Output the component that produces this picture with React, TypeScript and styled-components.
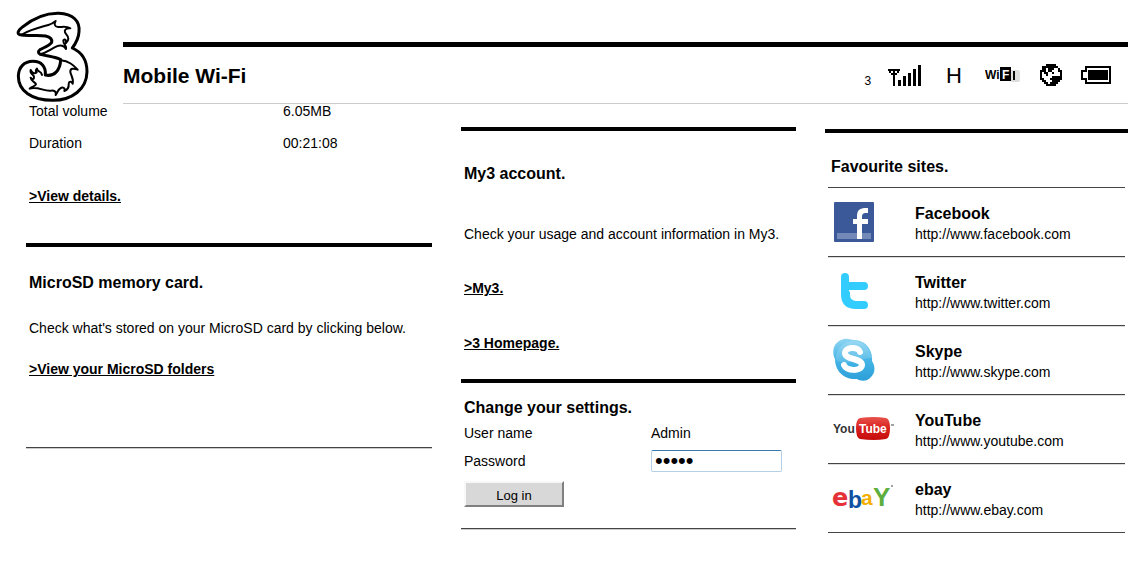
import React from "react";
import styled, { createGlobalStyle } from "styled-components";

const GlobalStyle = createGlobalStyle`
  *, *::before, *::after { box-sizing: border-box; }
  body {
    margin: 0;
    background: #fff;
    color: #000;
    font-family: "Liberation Sans", Arial, sans-serif;
    font-size: 14px;
    line-height: 16px;
  }
  h1, h2, p, dl, dd, ul { margin: 0; padding: 0; }
  svg { display: block; flex: none; }
`;

const Page = styled.div`
  padding-right: 8px;
`;

const Header = styled.header`
  display: flex;
  height: 104px;
`;

const LogoLink = styled.a`
  flex: none;
  width: 123px;
  padding: 5px 0 0 10px;
`;

const HeaderBar = styled.div`
  flex: 1;
  margin-top: 42px;
  border-top: 5px solid #000;
  border-bottom: 1px solid #ccc;
  display: flex;
  justify-content: space-between;
  align-items: center;
`;

const Title = styled.h1`
  padding-top: 2px;
  font-size: 21px;
  line-height: 24px;
`;

const Status = styled.div`
  display: flex;
  align-items: center;
  padding-right: 17px;
`;

const Network = styled.span`
  font-size: 12px;
  line-height: 14px;
  padding-top: 12px;
  margin-right: 17px;
`;

const Mode = styled.span`
  font-size: 22px;
  line-height: 24px;
  margin: 2px 23px 0 25px;
`;

const StatusIcon = styled.svg<{ $gap: number }>`
  margin-right: ${(p) => p.$gap}px;
`;

const Columns = styled.main`
  display: grid;
  grid-template-columns: 406fr 335fr 303fr;
  column-gap: 29px;
  padding-left: 26px;
  align-items: start;
`;

const Column = styled.div<{ $top?: number }>`
  min-width: 0;
  padding-top: ${(p) => p.$top ?? 0}px;
`;

const Panel = styled.section<{ $plain?: boolean; $top?: number; $bottom: number }>`
  border-top: ${(p) => (p.$plain ? "0" : "4px solid #000")};
  padding: ${(p) => p.$top ?? 0}px 3px ${(p) => p.$bottom}px;
`;

const Rule = styled.div`
  height: 2px;
  border-top: 1px solid #444;
  background: #ccc;
`;

const Heading = styled.h2`
  font-size: 16px;
  line-height: 18px;
`;

const Text = styled.p<{ $top: number }>`
  margin-top: ${(p) => p.$top}px;
`;

const ActionLink = styled.a<{ $top: number }>`
  display: block;
  width: fit-content;
  margin-top: ${(p) => p.$top}px;
  color: #000;
  font-weight: bold;
`;

const Stats = styled.dl`
  display: grid;
  grid-template-columns: 254px 1fr;
  row-gap: 18px;
  line-height: 14px;
`;

const Form = styled.form`
  display: grid;
  grid-template-columns: 187px 131px;
  align-items: center;
  row-gap: 9px;
  margin-top: 8px;
`;

const PasswordInput = styled.input`
  width: 100%;
  height: 22px;
  padding: 0 3px;
  border: 1px solid #b5cfe7;
  border-top-color: #3d7bad;
  border-radius: 2px;
  background: #fff;
  color: #000;
  font: 22px/20px "Liberation Sans", Arial, sans-serif;
`;

const LoginButton = styled.button`
  width: 100px;
  height: 26px;
  padding: 2px 0 0;
  border: 2px solid;
  border-color: #f8f8f8 #808080 #808080 #f8f8f8;
  background: #d8d8d8;
  color: #000;
  font: 13px "Liberation Sans", Arial, sans-serif;
`;

const SiteHeading = styled(Heading)`
  padding-left: 3px;
`;

const SiteList = styled.ul`
  margin-top: 11px;
  border-top: 1px solid #444;
  list-style: none;
`;

const SiteItem = styled.li`
  height: 69px;
  border-bottom: 1px solid #444;
  box-shadow: 0 1px #ddd;
`;

const SiteLink = styled.a`
  display: flex;
  align-items: center;
  height: 100%;
  color: #000;
  text-decoration: none;
`;

const SiteIcon = styled.span`
  flex: none;
  width: 87px;
  padding-left: 4px;
`;

const SiteText = styled.span`
  padding-top: 4px;
`;

const SiteName = styled.strong`
  display: block;
  font-size: 16px;
  line-height: 20px;
`;

const SiteUrl = styled.span`
  display: block;
  line-height: 20px;
`;

const Logo = () => (
  <svg width="85" height="100" viewBox="0 0 255 300" fill="none" stroke="#000" strokeLinejoin="round" strokeLinecap="round" role="img" aria-label="Three">
    <path
      strokeWidth="9"
      d="M30 89C20 87 24 76 36 67C66 43 105 24 146 25C190 27 210 48 207 80C206 102 196 117 187 129C216 142 231 168 231 200C230 252 187 286 128 286C65 286 25 258 25 213C26 187 42 169 69 169C94 169 108 185 106 210C132 216 151 196 152 164C136 155 112 154 91 148C83 144 84 138 90 134C103 127 118 122 125 112C127 102 121 96 107 93C82 88 51 95 30 89Z"
    />
    <path
      strokeWidth="6"
      d="M37 88C65 72 91 67 115 60C126 57 131 53 137 48C131 57 134 65 144 66C155 67 168 62 181 70C169 69 162 74 165 82C167 89 175 91 175 101C175 106 172 110 168 114C169 104 165 100 160 106C159 117 171 122 168 132C163 121 151 119 140 124C121 133 110 143 90 148M152 166C177 168 190 180 203 194C190 189 180 190 181 201C183 212 192 222 188 236C183 228 177 229 176 237C177 248 171 255 163 258C167 248 158 245 150 251C142 256 143 264 137 270C140 259 132 256 123 257C102 260 83 243 59 251C65 244 76 245 78 238C76 230 63 230 62 218C67 225 73 223 72 215C70 208 59 207 62 195C66 204 73 207 80 202C76 199 77 194 81 191C82 203 93 195 96 210"
    />
  </svg>
);

const SignalIcon = () => (
  <StatusIcon $gap={0} width="33" height="21" viewBox="0 0 33 21" shapeRendering="crispEdges" role="img" aria-label="Signal strength">
    <path d="M0 4h12v2h-1v2h-2v2h-2v11h-2v-11h-2v-2h-2v-2h-1zM3 6v2h2v-2zM7 6v2h2v-2z" fillRule="evenodd" />
    <path d="M10 15h3v6h-3zM15 11h3v10h-3zM20 8h3v13h-3zM25 4h3v17h-3zM30 0h3v21h-3z" />
  </StatusIcon>
);

const WifiIcon = () => (
  <StatusIcon $gap={20} width="35" height="16" viewBox="0 0 35 16" fontFamily="Liberation Sans, Arial, sans-serif" fontWeight="bold" role="img" aria-label="WiFi">
    <rect x="25" y="3" width="10" height="12" rx="2" fill="#ddd" />
    <rect x="15" y="0" width="11" height="14" />
    <text x="0" y="12" fontSize="12">Wi</text>
    <text x="17" y="12" fontSize="12" fill="#fff">F</text>
    <rect x="28" y="4" width="2" height="9" />
  </StatusIcon>
);

const globeRows = [
  "...#####...",
  ".########..",
  ".##.###..#.",
  "###.##...##",
  "#.##..#...#",
  "#..#......#",
  "#.....#####",
  "##...######",
  ".##...####.",
  "..##.####..",
  "...#####...",
];

const GlobeIcon = () => (
  <StatusIcon $gap={19} width="22" height="22" viewBox="0 0 11 11" shapeRendering="crispEdges" role="img" aria-label="Internet">
    {globeRows.flatMap((row, y) =>
      [...row].map((cell, x) => (cell === "#" ? <rect key={`${x}-${y}`} x={x} y={y} width="1" height="1" /> : null)),
    )}
  </StatusIcon>
);

const BatteryIcon = () => (
  <StatusIcon $gap={0} width="30" height="18" viewBox="0 0 30 18" shapeRendering="crispEdges" role="img" aria-label="Battery">
    <path fillRule="evenodd" d="M4 0h26v18h-26v-4h-4v-10h4zM6 2v4h-4v6h4v4h22v-14z" />
    <rect x="7" y="4" width="20" height="10" />
  </StatusIcon>
);

const FacebookIcon = () => (
  <svg width="44" height="40" viewBox="0 0 44 40" aria-hidden="true">
    <rect x="2" width="40" height="40" rx="1" fill="#3b5998" />
    <rect x="5" y="31" width="34" height="6" fill="#7389b8" />
    <path d="M25 37V22h-4v-5h4v-3c0-6 3-8 9-8h2v5h-2c-3 0-4 1-4 4v2h6v5h-6v15z" fill="#fff" />
  </svg>
);

const TwitterIcon = () => (
  <svg width="44" height="38" viewBox="0 0 44 38" aria-hidden="true">
    <path d="M13 5v17c0 8 4 11 11 11h8M13 14h19" fill="none" stroke="#3cf" strokeWidth="8" strokeLinecap="round" />
    <path d="M13 16v6c0 8 4 11 11 11l-3-5c-3-1-3-4-3-8z" fill="#3cf" />
  </svg>
);

const SkypeIcon = () => (
  <svg width="44" height="44" viewBox="0 0 44 44" aria-hidden="true">
    <defs>
      <linearGradient id="skype" x1="0" y1="0" x2="0" y2="1">
        <stop offset="0" stopColor="#8fd5f3" />
        <stop offset="0.5" stopColor="#45b5e6" />
        <stop offset="1" stopColor="#2c9fd9" />
      </linearGradient>
    </defs>
    <path d="M12 1C17 0 19 2 22 2C33 2 41 11 40 23C44 29 43 36 38 40C34 44 28 43 25 41C12 42 3 33 3 21C-1 13 2 3 12 1Z" fill="url(#skype)" />
    <path d="M4 22C14 29 27 20 40 20C38 10 31 3 22 3C11 3 3 12 4 22Z" fill="#fff" opacity="0.15" />
    <path d="M28 14C26 8 13 9 13 15C13 22 30 20 30 27C29 34 14 33 12 27" fill="none" stroke="#fff" strokeWidth="6" strokeLinecap="round" />
  </svg>
);

const YouTubeIcon = () => (
  <svg width="64" height="26" viewBox="0 0 64 26" fontFamily="Liberation Sans, Arial, sans-serif" fontWeight="bold" fontSize="12" aria-hidden="true">
    <defs>
      <linearGradient id="tube" x1="0" y1="0" x2="0" y2="1">
        <stop offset="0" stopColor="#e8534c" />
        <stop offset="0.5" stopColor="#d9201c" />
        <stop offset="1" stopColor="#c40c0c" />
      </linearGradient>
    </defs>
    <path d="M28 2Q42 0 54 2Q58 3 58 12Q58 22 54 23Q42 25 28 23Q24 22 24 12Q24 3 28 2Z" fill="url(#tube)" />
    <text x="1" y="17" fill="#333">You</text>
    <text x="27" y="17" fill="#fff">Tube</text>
    <path d="M59 9h3" stroke="#444" strokeWidth="1" />
  </svg>
);

const EbayIcon = () => (
  <svg width="62" height="32" viewBox="0 0 62 32" fontFamily="Liberation Sans, Arial, sans-serif" fontWeight="bold" aria-hidden="true">
    <text x="0" y="24" fontSize="24" fontFamily="DejaVu Sans, sans-serif" fill="#e53238">e</text>
    <text x="16" y="26" fontSize="23" fill="#0f50a0">b</text>
    <text x="29" y="23" fontSize="21" fill="#f5af02">a</text>
    <text x="41" y="24" fontSize="26" fill="#5dae3c">Y</text>
    <path d="M59 4h2" stroke="#444" />
  </svg>
);

const sites = [
  { name: "Facebook", url: "http://www.facebook.com", Icon: FacebookIcon },
  { name: "Twitter", url: "http://www.twitter.com", Icon: TwitterIcon },
  { name: "Skype", url: "http://www.skype.com", Icon: SkypeIcon },
  { name: "YouTube", url: "http://www.youtube.com", Icon: YouTubeIcon },
  { name: "ebay", url: "http://www.ebay.com", Icon: EbayIcon },
];

export default function App() {
  return (
    <Page>
      <GlobalStyle />
      <Header>
        <LogoLink href="#"><Logo /></LogoLink>
        <HeaderBar>
          <Title>Mobile Wi-Fi</Title>
          <Status>
            <Network>3</Network>
            <SignalIcon />
            <Mode>H</Mode>
            <WifiIcon />
            <GlobeIcon />
            <BatteryIcon />
          </Status>
        </HeaderBar>
      </Header>
      <Columns>
        <Column>
          <Panel $plain $bottom={39}>
            <Stats>
              <dt>Total volume</dt>
              <dd>6.05MB</dd>
              <dt>Duration</dt>
              <dd>00:21:08</dd>
            </Stats>
            <ActionLink href="#" $top={38}>&gt;View details.</ActionLink>
          </Panel>
          <Panel $top={27} $bottom={70}>
            <Heading>MicroSD memory card.</Heading>
            <Text $top={28}>Check what's stored on your MicroSD card by clicking below.</Text>
            <ActionLink href="#" $top={25}>&gt;View your MicroSD folders</ActionLink>
          </Panel>
          <Rule />
        </Column>
        <Column $top={23}>
          <Panel $top={34} $bottom={28}>
            <Heading>My3 account.</Heading>
            <Text $top={43}>Check your usage and account information in My3.</Text>
            <ActionLink href="#" $top={38}>&gt;My3.</ActionLink>
            <ActionLink href="#" $top={39}>&gt;3 Homepage.</ActionLink>
          </Panel>
          <Panel $top={16} $bottom={21}>
            <Heading>Change your settings.</Heading>
            <Form onSubmit={(e) => e.preventDefault()}>
              <span>User name</span>
              <span>Admin</span>
              <label htmlFor="password">Password</label>
              <PasswordInput id="password" type="password" defaultValue="admin" />
              <LoginButton type="submit">Log in</LoginButton>
            </Form>
          </Panel>
          <Rule />
        </Column>
        <Column $top={25}>
          <Panel $top={25} $bottom={0}>
            <SiteHeading>Favourite sites.</SiteHeading>
            <SiteList>
              {sites.map(({ name, url, Icon }) => (
                <SiteItem key={name}>
                  <SiteLink href={url}>
                    <SiteIcon><Icon /></SiteIcon>
                    <SiteText>
                      <SiteName>{name}</SiteName>
                      <SiteUrl>{url}</SiteUrl>
                    </SiteText>
                  </SiteLink>
                </SiteItem>
              ))}
            </SiteList>
          </Panel>
        </Column>
      </Columns>
    </Page>
  );
}
